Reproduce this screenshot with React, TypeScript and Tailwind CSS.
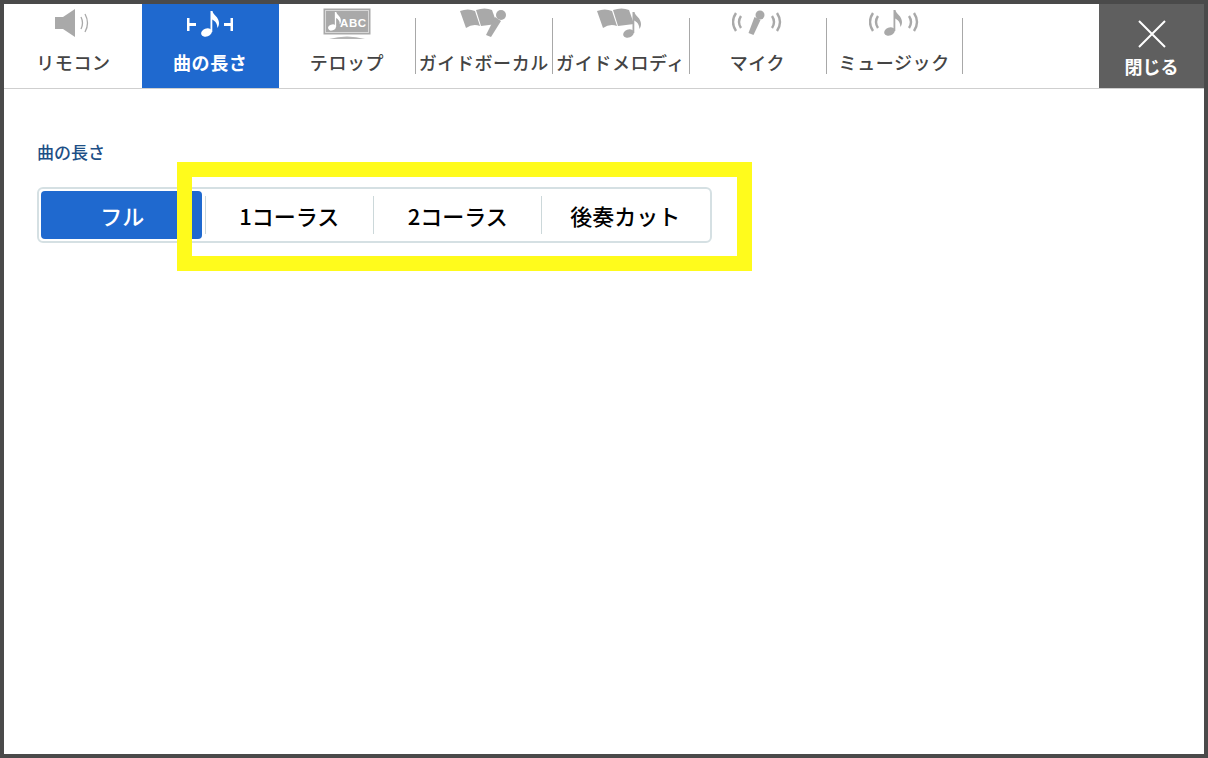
const font = "font-['Noto_Sans_CJK_JP','Noto_Sans',sans-serif]";

const Speaker = () => (
  <svg width="36" height="30" viewBox="0 0 36 30" fill="#a9a9a9">
    <path d="M0 8h8L20 0v28L8 20H0z" />
    <path d="M26 8q3 6 0 12M30 5q5 9 0 18" fill="none" stroke="#a9a9a9" strokeWidth="1.3" />
  </svg>
);
const Note = ({ c = "#a9a9a9" }: { c?: string }) => (
  <g fill={c}>
    <ellipse cx="5.5" cy="21.5" rx="5.5" ry="4" transform="rotate(-20 5.5 21.5)" />
    <path d="M9.5 21V0h2c.5 4 6.5 6 6.5 12 0 2-.7 4-1.7 5 .3-4-2-7-5-8.500V21z" />
  </g>
);
const Length = () => (
  <svg width="46" height="28" viewBox="0 0 46 28">
    <path d="M1 8v13M1 14.500h8M45 8v13M45 14.500h-8" stroke="#fff" strokeWidth="3" fill="none" />
    <g transform="translate(14 1)"><Note c="#fff" /></g>
  </svg>
);
const Telop = () => (
  <svg width="48" height="32" viewBox="0 0 48 32">
    <rect x="1" y="1" width="46" height="25" fill="#a9a9a9" stroke="#a9a9a9" />
    <rect x="2.500" y="2.500" width="43" height="22" fill="none" stroke="#d8d8d8" />
    <g transform="translate(5 4) scale(.72)"><Note c="#fff" /></g>
    <text x="17" y="19" fontSize="11.500" fontWeight="700" fill="#fff" fontFamily="Liberation Sans" letterSpacing=".6">ABC</text>
    <path d="M6 31q18-5 36 0z" fill="#b5b5b5" />
  </svg>
);
const Book = () => (
  <g fill="#a9a9a9">
    <path d="M0 3q8-3 15 0l5 15q-7-3-14 2z" />
    <path d="M16 2q9-3 16 0l5 14-16 2z" />
  </g>
);
const BookMic = () => (
  <svg width="48" height="32" viewBox="0 0 48 32">
    <Book />
    <circle cx="41" cy="7" r="5" fill="#a9a9a9" />
    <path d="M35 9l6 4-10 16-5-2z" fill="#a9a9a9" />
  </svg>
);
const BookNote = () => (
  <svg width="48" height="32" viewBox="0 0 48 32">
    <Book />
    <g transform="translate(26 4)"><Note /></g>
  </svg>
);
const Waves = () => (
  <g fill="none" stroke="#a9a9a9" strokeWidth="2.400">
    <path d="M4 3q-6 9 0 18M9 6q-4 6 0 12M45 3q6 9 0 18M40 6q4 6 0 12" />
  </g>
);
const Mic = () => (
  <svg width="50" height="28" viewBox="0 0 50 28">
    <Waves />
    <circle cx="28" cy="5" r="4.500" fill="#a9a9a9" />
    <path d="M22.500 7l6 3-7 15-5-2z" fill="#a9a9a9" />
  </svg>
);
const Music = () => (
  <svg width="50" height="28" viewBox="0 0 50 28">
    <Waves />
    <g transform="translate(15 0)"><Note /></g>
  </svg>
);

const tabs = [
  { label: "リモコン", icon: <Speaker /> },
  { label: "曲の長さ", icon: <Length />, active: true },
  { label: "テロップ", icon: <Telop /> },
  { label: "ガイドボーカル", icon: <BookMic />, sep: true },
  { label: "ガイドメロディ", icon: <BookNote />, sep: true },
  { label: "マイク", icon: <Mic />, sep: true },
  { label: "ミュージック", icon: <Music />, sep: true, last: true },
];

export default function App() {
  return (
    <div className={`${font} relative w-[1208px] h-[758px] bg-white border-4 border-[#4a4a4a] overflow-hidden`}>
      <header className="flex h-[85px] border-b border-[#cfcfcf] pl-px">
        {tabs.map((t) => (
          <div
            key={t.label}
            className={`relative flex w-[136.800px] flex-col items-center ${t.active ? "bg-[#1f69cf] text-white font-bold" : "text-[#444444] font-medium"}`}
          >
            {t.sep && <span className="absolute left-0 top-[14px] h-[56px] w-px bg-[#a8a8a8]" />}
            {t.last && <span className="absolute right-0 top-[14px] h-[56px] w-px bg-[#a8a8a8]" />}
            <div className="flex h-[40px] items-center">{t.icon}</div>
            <span className="mt-[4px] whitespace-nowrap text-[18px] leading-[28px] tracking-[.6px]">{t.label}</span>
          </div>
        ))}
        <button className="ml-auto flex h-[84px] w-[105px] flex-col items-center bg-[#5f5f5f] text-white">
          <svg className="mt-[16px]" width="30" height="28" viewBox="0 0 30 28">
            <path d="M2 1l26 26M28 1L2 27" stroke="#fff" strokeWidth="2" fill="none" />
          </svg>
          <span className="mt-[5px] text-[18px] font-bold leading-[26px]">閉じる</span>
        </button>
      </header>
      <main className="pl-[33px] pt-[50px]">
        <h2 className="text-[17px] font-medium leading-[26px] text-[#1d4f86]">曲の長さ</h2>
        <div className="mt-[22px] flex h-[56px] w-[675px] items-center rounded-[6px] border-2 border-[#d5e0e3] px-[2px] text-[22px] font-medium leading-none text-black">
          <div className="flex h-[48px] w-[161px] items-center justify-center rounded-[4px] bg-[#1f69cf] pl-[2px] text-white">フル</div>
          <div className="ml-[3px] flex h-[38px] w-[169px] items-center justify-center border-l border-[#ccd8da]">1コーラス</div>
          <div className="flex h-[38px] w-[169px] items-center justify-center border-l border-[#ccd8da]">2コーラス</div>
          <div className="flex h-[38px] w-[167px] items-center justify-center border-l border-[#ccd8da]">後奏カット</div>
        </div>
      </main>
      <div className="absolute left-[173px] top-[158px] h-[109px] w-[575px] border-[15px] border-[#fffb1c]" />
    </div>
  );
}
